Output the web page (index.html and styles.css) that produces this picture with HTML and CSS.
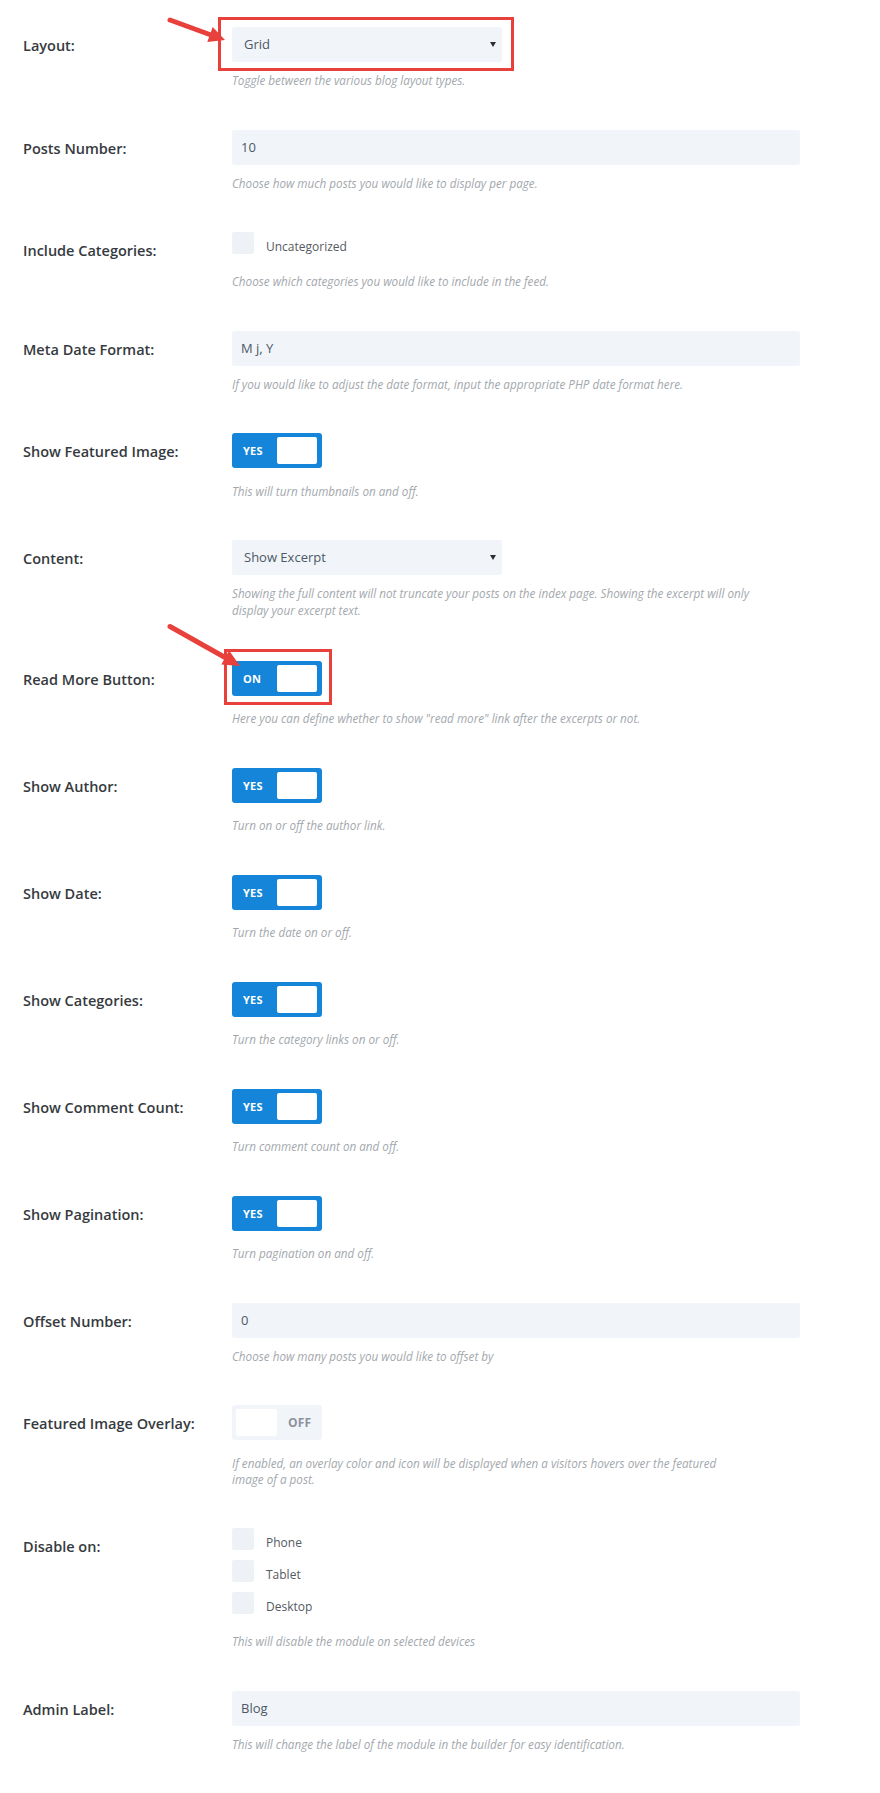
FILE: index.html
```html
<!DOCTYPE html>
<html lang="en">
<head>
<meta charset="utf-8">
<title>Blog Module Settings</title>
<link rel="stylesheet" href="styles.css">
</head>
<body>
<div class="panel">

  <div class="row">
    <div class="label">Layout:</div>
    <div class="field">
      <div class="input select">Grid</div>
      <div class="caption">Toggle between the various blog layout types.</div>
      <div class="highlight hl-select"></div>
      <svg class="arrow arrow-1" viewBox="0 0 70 35" width="70" height="35">
        <line x1="8" y1="8" x2="49" y2="23" stroke="#e8413b" stroke-width="5" stroke-linecap="round"/>
        <polygon points="63,28 45.3,30 50.7,15" fill="#e8413b"/>
      </svg>
    </div>
  </div>

  <div class="row">
    <div class="label">Posts Number:</div>
    <div class="field">
      <div class="input">10</div>
      <div class="caption">Choose how much posts you would like to display per page.</div>
    </div>
  </div>

  <div class="row">
    <div class="label">Include Categories:</div>
    <div class="field">
      <div class="checks">
        <div class="check"><span class="box"></span><span class="check-label">Uncategorized</span></div>
      </div>
      <div class="caption">Choose which categories you would like to include in the feed.</div>
    </div>
  </div>

  <div class="row">
    <div class="label">Meta Date Format:</div>
    <div class="field">
      <div class="input">M j, Y</div>
      <div class="caption">If you would like to adjust the date format, input the appropriate PHP date format here.</div>
    </div>
  </div>

  <div class="row">
    <div class="label">Show Featured Image:</div>
    <div class="field">
      <div class="toggle on"><span class="toggle-text">YES</span><span class="knob"></span></div>
      <div class="caption">This will turn thumbnails on and off.</div>
    </div>
  </div>

  <div class="row">
    <div class="label">Content:</div>
    <div class="field">
      <div class="input select">Show Excerpt</div>
      <div class="caption tall">Showing the full content will not truncate your posts on the index page. Showing the excerpt will only<br>display your excerpt text.</div>
    </div>
  </div>

  <div class="row">
    <div class="label">Read More Button:</div>
    <div class="field">
      <div class="toggle on"><span class="toggle-text">ON</span><span class="knob"></span></div>
      <div class="caption">Here you can define whether to show "read more" link after the excerpts or not.</div>
      <div class="highlight hl-toggle"></div>
      <svg class="arrow arrow-2" viewBox="0 0 85 55" width="85" height="55">
        <line x1="8" y1="7.5" x2="64" y2="39" stroke="#e8413b" stroke-width="5" stroke-linecap="round"/>
        <polygon points="78,47 59.3,45.6 67.1,31.6" fill="#e8413b"/>
      </svg>
    </div>
  </div>

  <div class="row">
    <div class="label">Show Author:</div>
    <div class="field">
      <div class="toggle on"><span class="toggle-text">YES</span><span class="knob"></span></div>
      <div class="caption">Turn on or off the author link.</div>
    </div>
  </div>

  <div class="row">
    <div class="label">Show Date:</div>
    <div class="field">
      <div class="toggle on"><span class="toggle-text">YES</span><span class="knob"></span></div>
      <div class="caption">Turn the date on or off.</div>
    </div>
  </div>

  <div class="row">
    <div class="label">Show Categories:</div>
    <div class="field">
      <div class="toggle on"><span class="toggle-text">YES</span><span class="knob"></span></div>
      <div class="caption">Turn the category links on or off.</div>
    </div>
  </div>

  <div class="row">
    <div class="label">Show Comment Count:</div>
    <div class="field">
      <div class="toggle on"><span class="toggle-text">YES</span><span class="knob"></span></div>
      <div class="caption">Turn comment count on and off.</div>
    </div>
  </div>

  <div class="row">
    <div class="label">Show Pagination:</div>
    <div class="field">
      <div class="toggle on"><span class="toggle-text">YES</span><span class="knob"></span></div>
      <div class="caption">Turn pagination on and off.</div>
    </div>
  </div>

  <div class="row">
    <div class="label">Offset Number:</div>
    <div class="field">
      <div class="input">0</div>
      <div class="caption">Choose how many posts you would like to offset by</div>
    </div>
  </div>

  <div class="row">
    <div class="label">Featured Image Overlay:</div>
    <div class="field">
      <div class="toggle off"><span class="knob"></span><span class="toggle-text">OFF</span></div>
      <div class="caption">If enabled, an overlay color and icon will be displayed when a visitors hovers over the featured<br>image of a post.</div>
    </div>
  </div>

  <div class="row">
    <div class="label">Disable on:</div>
    <div class="field">
      <div class="checks">
        <div class="check"><span class="box"></span><span class="check-label">Phone</span></div>
        <div class="check"><span class="box"></span><span class="check-label">Tablet</span></div>
        <div class="check"><span class="box"></span><span class="check-label">Desktop</span></div>
      </div>
      <div class="caption">This will disable the module on selected devices</div>
    </div>
  </div>

  <div class="row">
    <div class="label">Admin Label:</div>
    <div class="field">
      <div class="input">Blog</div>
      <div class="caption">This will change the label of the module in the builder for easy identification.</div>
    </div>
  </div>

</div>
</body>
</html>
```

FILE: styles.css
```css
html, body {
  margin: 0;
  padding: 0;
  background: #ffffff;
}

body {
  font-family: "Open Sans", "Noto Sans", sans-serif;
  color: #333333;
}

.panel {
  display: flex;
  flex-direction: column;
  gap: 41.5px;
  padding: 27px 0 0 23px;
}

.row {
  display: grid;
  grid-template-columns: 209px 568px;
  align-items: start;
}

.label {
  font-size: 14.5px;
  font-weight: 600;
  line-height: 21px;
  padding-top: 8px;
  color: #363a3e;
}

.field {
  position: relative;
}

.input {
  box-sizing: border-box;
  height: 35px;
  background: #f1f5f9;
  border-radius: 2px;
  padding-left: 9px;
  font-size: 13px;
  line-height: 35px;
  color: #4c5866;
}

.select {
  position: relative;
  width: 270px;
  padding-left: 12px;
}

.select::after {
  content: "";
  position: absolute;
  right: 6px;
  top: 15px;
  border-left: 3px solid transparent;
  border-right: 3px solid transparent;
  border-top: 5px solid #2b2f33;
}

.caption {
  margin-top: 10px;
  font-size: 11.7px;
  font-style: italic;
  line-height: 16px;
  color: #a3a8ad;
  white-space: nowrap;
}

.caption.tall {
  line-height: 17px;
}

.toggle {
  box-sizing: border-box;
  width: 90px;
  height: 35px;
  border-radius: 3px;
  display: flex;
  align-items: center;
}

.toggle + .caption {
  margin-top: 14.5px;
}

.toggle.on {
  background: #1585d9;
  justify-content: space-between;
  padding: 0 5px 0 11px;
}

.toggle.off {
  background: #f1f5f9;
  padding: 0 0 0 4px;
  gap: 11px;
}

.toggle-text {
  font-size: 11px;
  font-weight: 700;
  letter-spacing: 0.2px;
}

.toggle.on .toggle-text {
  color: #ffffff;
}

.toggle.off .toggle-text {
  color: #8c939b;
  font-size: 12px;
}

.knob {
  display: block;
  width: 40px;
  height: 27px;
  background: #ffffff;
  border-radius: 2px;
}

.toggle.off .knob {
  width: 41px;
}

.checks {
  display: flex;
  flex-direction: column;
}

.check {
  display: flex;
  align-items: flex-start;
  height: 32px;
}

.box {
  display: block;
  width: 22px;
  height: 22px;
  background: #eef2f6;
  border-radius: 2px;
}

.check-label {
  margin-left: 12px;
  margin-top: 4px;
  font-size: 12px;
  line-height: 22px;
  color: #555a60;
}

.checks + .caption {
  margin-top: 9px;
}

.highlight {
  position: absolute;
  box-sizing: border-box;
  border: 3px solid #e8413b;
  z-index: 1;
}

.hl-select {
  left: -14px;
  top: -10px;
  width: 296px;
  height: 54px;
}

.hl-toggle {
  left: -8px;
  top: -12px;
  width: 108px;
  height: 56px;
}

.arrow {
  position: absolute;
  z-index: 2;
  overflow: visible;
}

.arrow-1 {
  left: -70px;
  top: -15px;
}

.arrow-2 {
  left: -70px;
  top: -42px;
}
```
